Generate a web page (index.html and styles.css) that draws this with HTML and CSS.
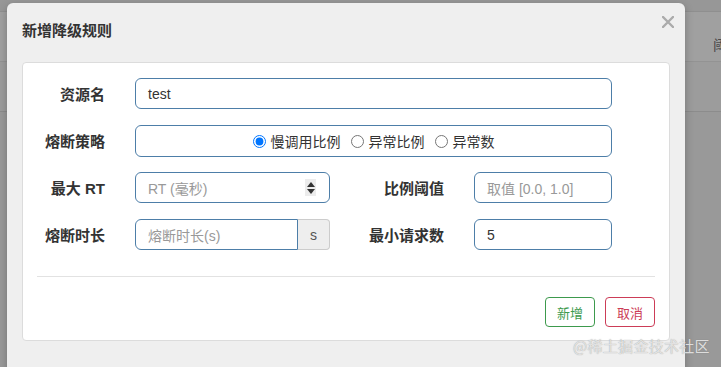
FILE: index.html
```html
<!DOCTYPE html>
<html lang="zh">
<head>
<meta charset="utf-8">
<title>新增降级规则</title>
<link rel="stylesheet" href="styles.css">
</head>
<body>
<div class="page">
  <div class="page-top"></div>
  <div class="page-head"><span class="page-th">阈</span></div>
  <div class="page-row"></div>
</div>

<div class="modal">
  <div class="modal-header">
    <h4 class="modal-title">新增降级规则</h4>
    <svg class="close" width="12" height="12" viewBox="0 0 12 12"><path d="M1 1 L11 11 M11 1 L1 11" stroke="#ababab" stroke-width="2.4" stroke-linecap="round"/></svg>
  </div>
  <div class="card">
    <div class="form">
      <label class="lbl">资源名</label>
      <div class="box span3"><span class="val">test</span></div>

      <label class="lbl">熔断策略</label>
      <div class="box span3 radios">
        <label class="radio"><input type="radio" name="g" checked> 慢调用比例</label>
        <label class="radio"><input type="radio" name="g"> 异常比例</label>
        <label class="radio"><input type="radio" name="g"> 异常数</label>
      </div>

      <label class="lbl">最大 RT</label>
      <div class="box"><span class="ph">RT (毫秒)</span><span class="spin"><i class="up"></i><i class="down"></i></span></div>
      <label class="lbl">比例阈值</label>
      <div class="box"><span class="ph">取值 [0.0, 1.0]</span></div>

      <label class="lbl">熔断时长</label>
      <div class="group">
        <div class="box grp-input"><span class="ph">熔断时长(s)</span></div>
        <div class="addon">s</div>
      </div>
      <label class="lbl">最小请求数</label>
      <div class="box"><span class="val">5</span></div>
    </div>
    <div class="divider"></div>
    <div class="actions">
      <button class="btn btn-green">新增</button>
      <button class="btn btn-red">取消</button>
    </div>
  </div>
</div>

<div class="watermark">@稀土掘金技术社区</div>
</body>
</html>
```
FILE: styles.css
```css
* { box-sizing: border-box; }
html, body { margin: 0; height: 100%; }
body {
  background: #999999;
  font-family: "Liberation Sans", "Noto Sans CJK SC", sans-serif;
  color: #333;
  position: relative;
  overflow: hidden;
}
.page { width: 100%; }
.page-top { height: 11px; background: #979797; }
.page-head {
  height: 51px;
  background: #a0a0a0;
  border-top: 1px solid #8f8f8f;
  border-bottom: 1px solid #939393;
  display: flex;
  justify-content: flex-end;
  align-items: center;
  padding-top: 14px;
}
.page-th { font-size: 14px; color: #4a4a4a; margin-right: -6px; }
.page-row { height: 50px; background: #9c9c9c; border-bottom: 1px solid #8c8c8c; }

.modal {
  position: absolute;
  left: 7px;
  top: 3px;
  width: 678px;
  height: 380px;
  background: #efefef;
  border-radius: 6px;
  box-shadow: 0 3px 9px rgba(0,0,0,0.25);
}
.modal-header {
  height: 59px;
  padding: 17px 15px 0 15px;
  display: flex;
  justify-content: space-between;
  align-items: flex-start;
}
.modal-title {
  margin: 0;
  font-size: 15px;
  line-height: 20px;
  font-weight: bold;
  color: #333;
  font-family: "Noto Sans CJK SC", sans-serif;
}
.close { margin-top: -4px; margin-right: -4px; }

.card {
  margin: 0 15px;
  height: 279px;
  background: #fff;
  border: 1px solid #dcdcdc;
  border-radius: 4px;
  padding-top: 15px;
}
.form {
  display: grid;
  grid-template-columns: 112px 195px 144px 138px;
  grid-auto-rows: 31px;
  row-gap: 16px;
}
.lbl {
  font-family: "Liberation Sans", "Noto Sans CJK SC", sans-serif;
  font-weight: bold;
  font-size: 15px;
  color: #333;
  text-align: right;
  padding-right: 30px;
  align-self: center;
}
.box {
  border: 1px solid #4d7ea8;
  border-radius: 6px;
  display: flex;
  align-items: center;
  padding: 0 12px;
  font-size: 14px;
}
.span3 { grid-column: span 3; }
.val { color: #333; font-size: 14px; }
.ph { color: #999; font-size: 14px; flex: 1; }
.radios { justify-content: center; gap: 10px; padding: 0; height: 32px; }
.radio {
  display: flex;
  align-items: center;
  font-size: 14px;
  color: #333;
  font-family: "Noto Sans CJK SC", sans-serif;
}
.radio input { margin: 0 5px 0 0; width: 13px; height: 13px; }
.spin {
  width: 11px;
  height: 17px;
  background: #ececec;
  display: flex;
  flex-direction: column;
  align-items: center;
  justify-content: center;
  gap: 2px;
  margin-right: 1px;
}
.spin i { width: 0; height: 0; border-left: 4px solid transparent; border-right: 4px solid transparent; }
.spin .up { border-bottom: 5px solid #333; }
.spin .down { border-top: 5px solid #333; }
.group { display: flex; }
.grp-input { flex: 1; border-radius: 6px 0 0 6px; }
.addon {
  width: 32px;
  background: #eee;
  border: 1px solid #ccc;
  border-left: 0;
  border-radius: 0 4px 4px 0;
  display: flex;
  align-items: center;
  justify-content: center;
  font-size: 14px;
  color: #555;
}
.divider {
  margin: 26px 14px 0 14px;
  border-top: 1px solid #e2e2e2;
}
.actions {
  display: flex;
  justify-content: flex-end;
  gap: 10px;
  padding: 20px 14px 0 0;
}
.btn {
  width: 50px;
  height: 30px;
  background: #fff;
  border-radius: 4px;
  font-family: "Noto Sans CJK SC", sans-serif;
  font-size: 13px;
  padding: 0;
  cursor: pointer;
}
.btn-green { border: 1px solid #3d9a4d; color: #3d9a4d; }
.btn-red { border: 1px solid #cc3c57; color: #cc3c57; }

.watermark {
  position: absolute;
  left: 573px;
  top: 335px;
  font-family: "Noto Sans CJK SC", sans-serif;
  font-size: 15px;
  color: rgba(235,235,235,0.9);
  text-shadow: 0 0 1px rgba(110,110,110,0.7);
  letter-spacing: 0.3px;
}
```
